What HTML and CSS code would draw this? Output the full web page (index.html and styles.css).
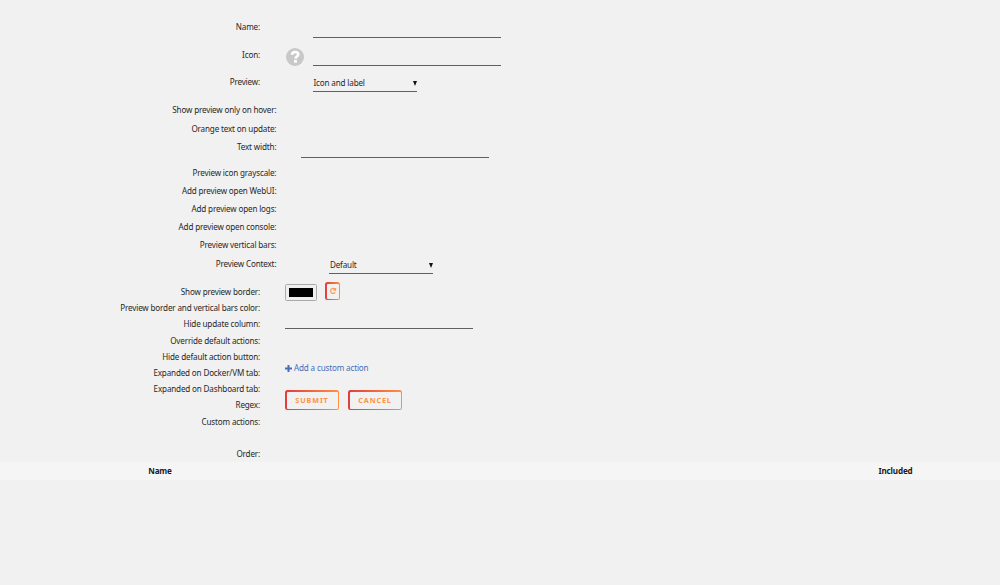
FILE: index.html
```
<!DOCTYPE html>
<html lang="en">
<head>
<meta charset="utf-8">
<title>Folder settings</title>
<link rel="stylesheet" href="styles.css">
</head>
<body>
<form class="settings">
  <div class="row short"><label>Name:</label><div class="field indent"><span class="line"></span></div></div>
  <div class="row icon-row"><label>Icon:</label><div class="field"><svg class="help" viewBox="0 0 18 18"><circle cx="9" cy="9" r="9" fill="#c8c8c8"/><path d="M5.9 6.7C6.2 4.8 7.3 4 9.1 4c1.9 0 3.1 1 3.1 2.5 0 2-2.6 2.1-2.7 4.1" fill="none" stroke="#fff" stroke-width="2.7"/><rect x="8" y="11.9" width="2.9" height="2.8" fill="#fff"/></svg><span class="line"></span></div></div>
  <div class="row preview-row"><label>Preview:</label><div class="field indent"><span class="select">Icon and label<i class="arrow"></i></span></div></div>
  <div class="row wide hover-row"><label>Show preview only on hover:</label></div>
  <div class="row wide update-row"><label>Orange text on update:</label></div>
  <div class="row wide width-row"><label>Text width:</label><div class="field"><span class="line"></span></div></div>
  <div class="row wide"><label>Preview icon grayscale:</label></div>
  <div class="row wide"><label>Add preview open WebUI:</label></div>
  <div class="row wide"><label>Add preview open logs:</label></div>
  <div class="row wide"><label>Add preview open console:</label></div>
  <div class="row wide"><label>Preview vertical bars:</label></div>
  <div class="row wide context-row"><label>Preview Context:</label><div class="field indent"><span class="select">Default<i class="arrow"></i></span></div></div>
  <div class="lower">
    <div class="labels">
      <label>Show preview border:</label>
      <label>Preview border and vertical bars color:</label>
      <label>Hide update column:</label>
      <label>Override default actions:</label>
      <label>Hide default action button:</label>
      <label>Expanded on Docker/VM tab:</label>
      <label>Expanded on Dashboard tab:</label>
      <label>Regex:</label>
      <label>Custom actions:</label>
      <label class="order">Order:</label>
    </div>
    <div class="controls">
      <div class="color-row"><span class="swatch"><i></i></span><button type="button" class="btn reset"><svg viewBox="0 0 8 8"><path d="M6.1 2.4A2.5 2.5 0 1 0 6.3 5.2M6.6 1V3.2H4.3" fill="none" stroke="#ff9b58" stroke-width="1.2"/></svg></button></div>
      <span class="line regex"></span>
      <a class="add"><svg viewBox="0 0 7 7"><path d="M3.5 0V7M0 3.5H7" stroke="#486dba" stroke-width="2"/></svg><span>Add a custom action</span></a>
      <div class="actions"><button type="button" class="btn">SUBMIT</button><button type="button" class="btn">CANCEL</button></div>
    </div>
  </div>
</form>
<div class="table-head"><span class="name">Name</span><span class="included">Included</span></div>
</body>
</html>
```
FILE: styles.css
```
* { box-sizing: border-box; }
body {
  margin: 0;
  height: 585px;
  background: #f1f1f1;
  color: #282828;
  font: 8.1px/16px "Noto Sans", sans-serif;
  letter-spacing: -0.16px;
}
.settings { height: 462px; padding-top: 19px; }
.row { display: flex; height: 18px; }
.row label { width: 260px; text-align: right; flex: none; }
.row.wide label { width: 276.4px; }
.field { display: flex; align-items: flex-start; padding-left: 25px; }
.field.indent { padding-left: 53px; }
.short { height: 28px; }
.icon-row { height: 27px; }
.preview-row { height: 28px; }
.hover-row { height: 19px; }
.update-row { height: 18px; }
.width-row { height: 26px; }
.context-row { height: 28px; padding-top: 1px; margin-bottom: 1px; }
.line { display: block; width: 187.5px; height: 19px; border-bottom: 1px solid #606060; }
.help { width: 18px; height: 18px; margin: 1px 9px 0 1px; }
.select {
  display: flex;
  justify-content: space-between;
  align-items: center;
  width: 104px;
  height: 18px;
  padding-left: .5px;
  padding-top: 1px;
  border-bottom: 1px solid #606060;
}
.arrow { border: 2.5px solid transparent; border-top: 5px solid #111; border-bottom: 0; }
.lower { display: flex; }
.labels { width: 260px; display: flex; flex-direction: column; text-align: right; }
.labels label { height: 16.2px; }
.labels .order { margin-top: 16.2px; }
.controls { padding-left: 25px; }
.color-row { display: flex; height: 26px; }
.swatch {
  width: 32px;
  height: 17px;
  padding: 3px;
  border: 1px solid #aaa;
  border-radius: 1.5px;
  background: #efefef;
}
.swatch i { display: block; height: 9px; background: #000; }
.btn {
  width: 54px;
  height: 20px;
  padding: 1.5px;
  border: 0;
  border-radius: 2.5px;
  color: #ff9140;
  background: linear-gradient(#f1f1f1, #f1f1f1) content-box, linear-gradient(90deg, #e33c3c, #ff9140);
  font: bold 7.2px/17px "Noto Sans", sans-serif;
  letter-spacing: .9px;
}
.reset { width: 15px; height: 18px; margin: -2px 0 0 8px; display: flex; align-items: center; justify-content: center; }
.reset svg { width: 8px; height: 8px; }
.add { display: flex; align-items: center; gap: 2px; margin-top: 31px; color: #486dba; }
.add svg { width: 7px; height: 7px; }
.actions { display: flex; gap: 9px; margin-top: 14px; }
.table-head { display: flex; height: 18px; line-height: 18px; background: #f5f5f5; color: #1c1b1b; font-weight: bold; }
.name { width: 320px; text-align: center; }
.included { width: 680px; padding-left: 558.5px; }
```
